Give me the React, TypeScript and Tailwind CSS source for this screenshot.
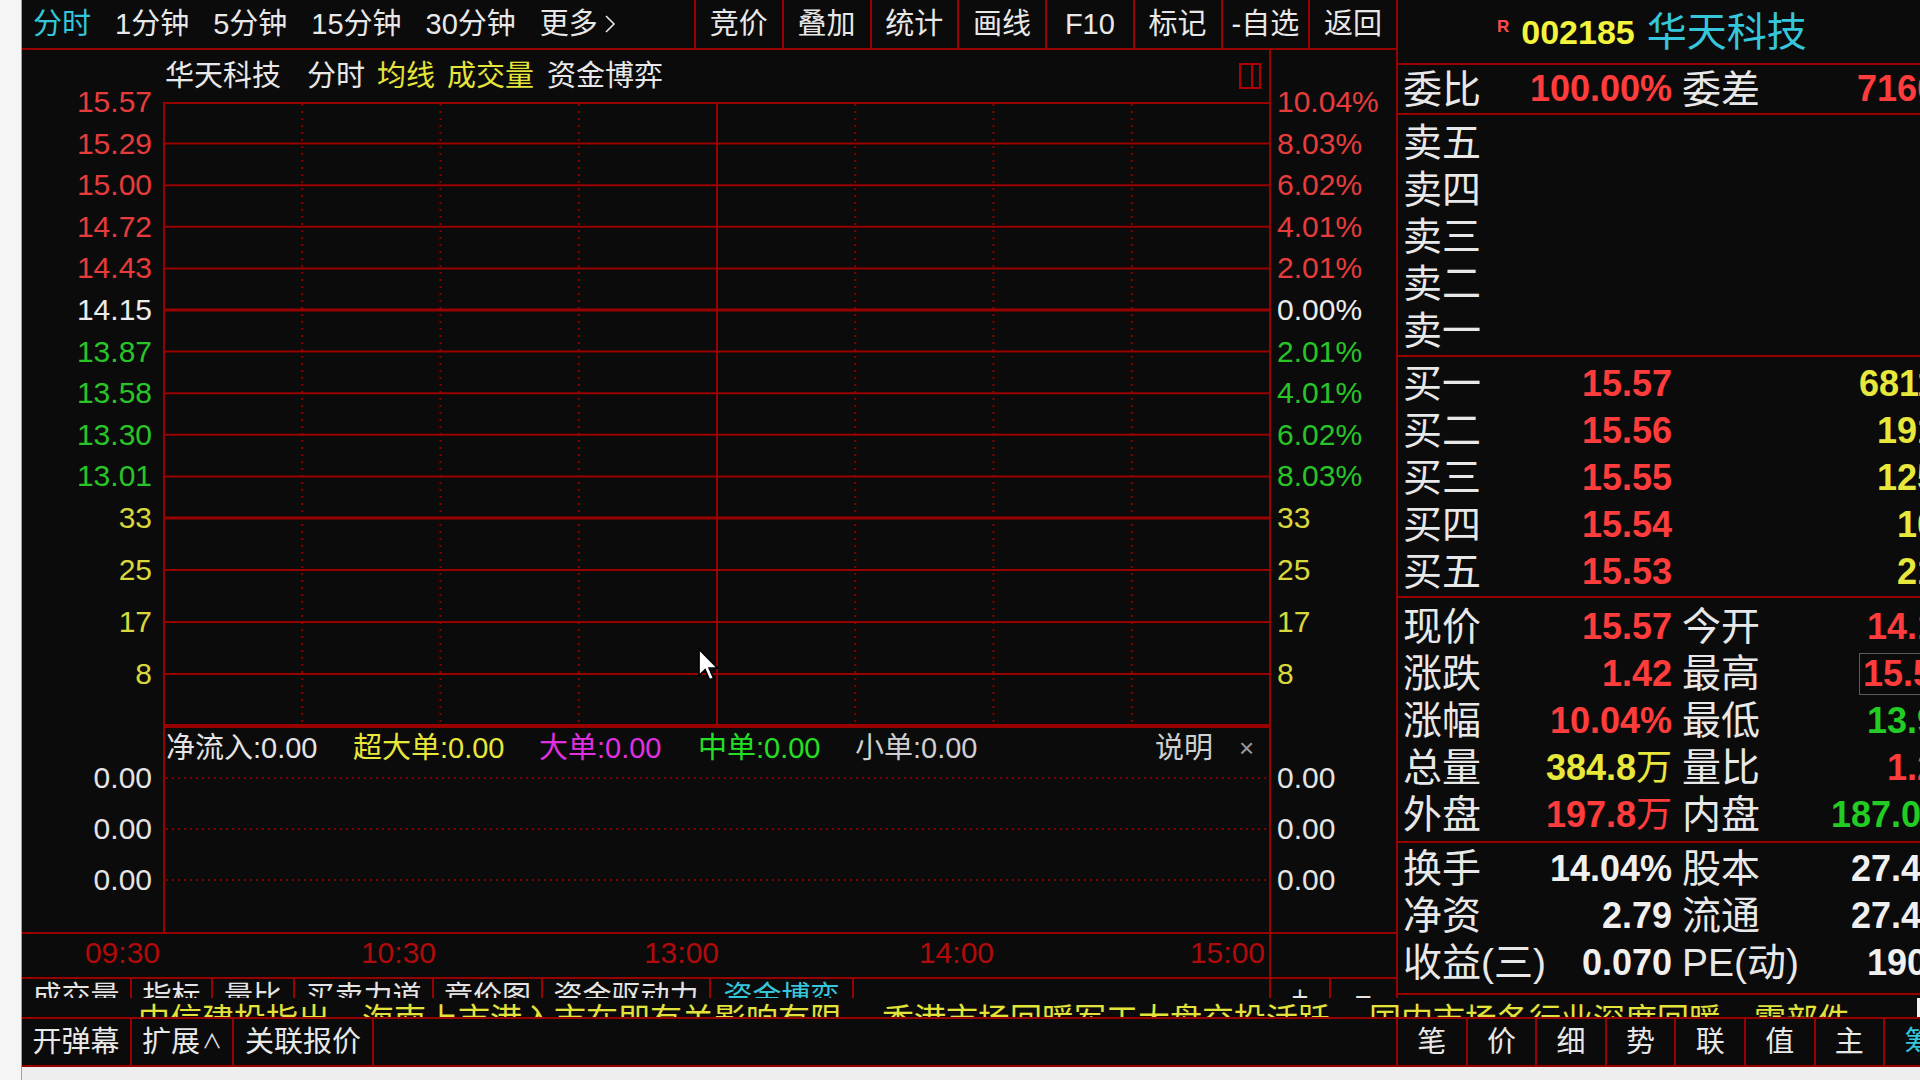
import React from "react";

const LINE = "#990000";

const RED = "text-[#ff3c3c]";
const GREEN = "text-[#22cc22]";
const YEL = "text-[#e8e83c]";
const WH = "text-[#f0f0f0]";

type Tick = { t: string; y: number; c: string };

const PRICE_Y = Array.from({ length: 11 }, (_, i) => i * 41.6);

const leftPrice: Tick[] = [
  ["15.57", "text-[#e63c3c]"],
  ["15.29", "text-[#e63c3c]"],
  ["15.00", "text-[#e63c3c]"],
  ["14.72", "text-[#e63c3c]"],
  ["14.43", "text-[#e63c3c]"],
  ["14.15", "text-[#ececec]"],
  ["13.87", "text-[#28c428]"],
  ["13.58", "text-[#28c428]"],
  ["13.30", "text-[#28c428]"],
  ["13.01", "text-[#28c428]"],
].map(([t, c], i) => ({ t, c, y: PRICE_Y[i] }));

const rightPct: Tick[] = [
  ["10.04%", "text-[#e63c3c]"],
  ["8.03%", "text-[#e63c3c]"],
  ["6.02%", "text-[#e63c3c]"],
  ["4.01%", "text-[#e63c3c]"],
  ["2.01%", "text-[#e63c3c]"],
  ["0.00%", "text-[#ececec]"],
  ["2.01%", "text-[#28c428]"],
  ["4.01%", "text-[#28c428]"],
  ["6.02%", "text-[#28c428]"],
  ["8.03%", "text-[#28c428]"],
].map(([t, c], i) => ({ t, c, y: PRICE_Y[i] }));

const vol: Tick[] = [
  ["33", 416],
  ["25", 468],
  ["17", 520],
  ["8", 572],
].map(([t, y]) => ({ t: t as string, y: y as number, c: "text-[#d8d83c]" }));

const funds: Tick[] = [52, 103, 154].map((y) => ({ t: "0.00", y, c: "text-[#e4e4e4]" }));

function Axis({ items, side }: { items: Tick[]; side: "l" | "r" }) {
  return (
    <div className="relative h-full">
      {items.map((it, i) => (
        <span
          key={i}
          className={`absolute -translate-y-1/2 text-[30px] leading-[30px] whitespace-nowrap ${it.c} ${
            side === "l" ? "right-[11px]" : "left-[6px]"
          }`}
          style={{ top: it.y }}
        >
          {it.t}
        </span>
      ))}
    </div>
  );
}

function PricePlot() {
  const W = 1108;
  const dots = [1, 2, 3, 5, 6, 7].map((k) => 1 + (1106 * k) / 8);
  return (
    <svg width={W} height={624} className="block">
      {dots.map((x) => (
        <line key={x} x1={x} x2={x} y1={2} y2={622} stroke="#8a0000" strokeWidth={2} strokeDasharray="2 5" />
      ))}
      <line x1={554} x2={554} y1={0} y2={624} stroke={LINE} strokeWidth={2} />
      {PRICE_Y.map((y, i) => (
        <line
          key={i}
          x1={0}
          x2={W}
          y1={i === 0 ? 1 : y}
          y2={i === 0 ? 1 : y}
          stroke={LINE}
          strokeWidth={i === 5 || i === 10 ? 3 : 2}
        />
      ))}
      {[468, 520, 572].map((y) => (
        <line key={y} x1={0} x2={W} y1={y} y2={y} stroke={LINE} strokeWidth={2} />
      ))}
      <line x1={0} x2={W} y1={623} y2={623} stroke={LINE} strokeWidth={2} />
      <line x1={1} x2={1} y1={0} y2={624} stroke={LINE} strokeWidth={2} />
      <line x1={1107} x2={1107} y1={0} y2={624} stroke={LINE} strokeWidth={2} />
    </svg>
  );
}

function FundsPlot() {
  return (
    <svg width={1108} height={206} className="absolute inset-0">
      <line x1={0} x2={1108} y1={1} y2={1} stroke={LINE} strokeWidth={2} />
      {[52, 103, 154].map((y) => (
        <line key={y} x1={3} x2={1105} y1={y} y2={y} stroke="#7c0000" strokeWidth={2} strokeDasharray="2 4" />
      ))}
      <line x1={1} x2={1} y1={0} y2={206} stroke={LINE} strokeWidth={2} />
      <line x1={1107} x2={1107} y1={0} y2={206} stroke={LINE} strokeWidth={2} />
    </svg>
  );
}

const times: [string, number][] = [
  ["09:30", 138],
  ["10:30", 414],
  ["13:00", 697],
  ["14:00", 972],
  ["15:00", 1243],
];

const tabs = [
  { t: "成交量", w: "w-[110px]" },
  { t: "指标", w: "w-[81px]" },
  { t: "量比", w: "w-[82px]" },
  { t: "买卖力道", w: "w-[139px]" },
  { t: "竞价图", w: "w-[109px]" },
  { t: "资金驱动力", w: "w-[168px]" },
  { t: "资金博弈", w: "w-[143px]", on: true },
];

function LeftArea() {
  return (
    <div className="w-[1374px] shrink-0 flex flex-col">
      {/* 顶部周期/功能栏 */}
      <div className="h-[50px] shrink-0 flex border-b-2 border-[#990000] text-[29px] leading-none text-[#e8e8e8]">
        <div className="w-[672px] shrink-0 flex items-center gap-[24px] pl-[11px] whitespace-nowrap">
          <span className="text-[#36c6dc]">分时</span>
          <span>1分钟</span>
          <span>5分钟</span>
          <span>15分钟</span>
          <span>30分钟</span>
          <span className="flex items-center">
            更多
            <svg width="12" height="20" viewBox="0 0 12 20" className="ml-[6px]">
              <polyline points="2,2 10,10 2,18" fill="none" stroke="#e8e8e8" strokeWidth="1.6" />
            </svg>
          </span>
        </div>
        {["竞价", "叠加", "统计", "画线", "F10", "标记", "-自选", "返回"].map((b) => (
          <div key={b} className="w-[87.75px] shrink-0 border-l-2 border-[#990000] flex items-center justify-center whitespace-nowrap">
            {b}
          </div>
        ))}
      </div>

      {/* 图表 */}
      <div className="h-[882px] shrink-0 flex flex-col">
        <div className="h-[52px] shrink-0 w-[1249px] border-r-2 border-[#990000] flex items-center pl-[143px] text-[29px] leading-none whitespace-nowrap">
          <span className="text-[#e8e8e8] mr-[26px]">华天科技</span>
          <span className="text-[#e8e8e8] mr-[12px]">分时</span>
          <span className="text-[#e4e43a] mr-[12px]">均线</span>
          <span className="text-[#e4e43a] mr-[13px]">成交量</span>
          <span className="text-[#e8e8e8]">资金博弈</span>
          <div className="ml-auto mr-[8px] mb-[1px] w-[22px] h-[26px] border-2 border-[#b00000] flex">
            <div className="w-[12px] border-r-2 border-[#b00000]" />
          </div>
        </div>

        <div className="h-[624px] shrink-0 flex">
          <div className="w-[141px] shrink-0">
            <Axis items={[...leftPrice, ...vol]} side="l" />
          </div>
          <div className="w-[1108px] shrink-0">
            <PricePlot />
          </div>
          <div className="flex-1">
            <Axis items={[...rightPct, ...vol]} side="r" />
          </div>
        </div>

        <div className="h-[206px] shrink-0 flex">
          <div className="w-[141px] shrink-0">
            <Axis items={funds} side="l" />
          </div>
          <div className="w-[1108px] shrink-0 relative">
            <FundsPlot />
            <div className="relative h-[44px] flex items-center pl-[3px] text-[29px] leading-none whitespace-nowrap">
              <span className="w-[187px] shrink-0 text-[#e4e4e4]">净流入:0.00</span>
              <span className="w-[186px] shrink-0 text-[#e8e83a]">超大单:0.00</span>
              <span className="w-[159px] shrink-0 text-[#e030e0]">大单:0.00</span>
              <span className="w-[157px] shrink-0 text-[#24e024]">中单:0.00</span>
              <span className="w-[300px] shrink-0 text-[#cfcfcf]">小单:0.00</span>
              <span className="text-[#cfcfcf]">说明</span>
              <span className="ml-[26px] text-[26px] text-[#9a9a9a]">×</span>
            </div>
          </div>
          <div className="flex-1">
            <Axis items={funds} side="r" />
          </div>
        </div>
      </div>

      {/* 时间轴 */}
      <div className="h-[45px] shrink-0 flex border-t-2 border-[#990000]">
        <div className="w-[1249px] shrink-0 relative border-r-2 border-[#990000]">
          {times.map(([t, x]) => (
            <span
              key={t}
              className="absolute top-[4px] -translate-x-full text-[30px] leading-[30px] text-[#b00a0a]"
              style={{ left: x }}
            >
              {t}
            </span>
          ))}
        </div>
      </div>

      {/* 指标页签 */}
      <div className="h-[21px] shrink-0 flex border-t-2 border-[#990000] overflow-hidden text-[29px] leading-[29px] whitespace-nowrap">
        {tabs.map((tb) => (
          <div
            key={tb.t}
            className={`${tb.w} shrink-0 border-r-2 border-[#990000] text-center pt-[4px] ${
              tb.on ? "text-[#36c6dc]" : "text-[#e4e4e4]"
            }`}
          >
            {tb.t}
          </div>
        ))}
        <div className="w-[417px] shrink-0 border-r-2 border-[#990000]" />
        <div className="w-[60px] shrink-0 border-r-2 border-[#990000] text-center pt-[4px] text-[#e4e4e4]">+</div>
        <div className="flex-1 text-center pt-[4px] text-[#e4e4e4]">−</div>
      </div>
    </div>
  );
}

function QRow({
  l,
  v,
  vc = "",
  r,
  rv,
  rvc = "",
  h = "h-[47px]",
}: {
  l: React.ReactNode;
  v?: React.ReactNode;
  vc?: string;
  r?: React.ReactNode;
  rv?: React.ReactNode;
  rvc?: string;
  h?: string;
}) {
  return (
    <div className={`${h} flex items-center pl-[5px] whitespace-nowrap leading-none`}>
      <span className="w-[120px] shrink-0 text-[39px] text-[#e8e8e8]">{l}</span>
      <span className={`w-[149px] shrink-0 text-right text-[36px] font-bold ${vc}`}>{v}</span>
      <span className="w-[90px] shrink-0 pl-[10px] text-[39px] text-[#e8e8e8]">{r}</span>
      <span className={`w-[195px] shrink-0 text-right text-[36px] font-bold ${rvc}`}>{rv}</span>
    </div>
  );
}

const wan = <span className="font-normal">万</span>;

function RightPanel() {
  return (
    <div className="flex-1 min-w-0 overflow-hidden border-l-2 border-[#990000] flex flex-col">
      <div className="h-[65px] shrink-0 border-b-2 border-[#990000] flex items-center pl-[99px] whitespace-nowrap leading-none">
        <span className="self-start mt-[18px] text-[17px] font-bold text-[#ff4a4a]">R</span>
        <span className="ml-[12px] text-[34px] font-bold text-[#f4f43c]">002185</span>
        <span className="ml-[12px] text-[40px] text-[#36c6dc]">华天科技</span>
      </div>

      <div className="h-[50px] shrink-0 border-b-2 border-[#990000]">
        <QRow h="h-[48px]" l="委比" v="100.00%" vc={RED} r="委差" rv="71606" rvc={RED} />
      </div>

      <div className="h-[242px] shrink-0 border-b-2 border-[#990000] pt-[4px]">
        {["卖五", "卖四", "卖三", "卖二", "卖一"].map((s) => (
          <QRow key={s} l={s} />
        ))}
      </div>

      <div className="h-[241px] shrink-0 border-b-2 border-[#990000] pt-[3px]">
        {[
          ["买一", "15.57", "68117"],
          ["买二", "15.56", "1912"],
          ["买三", "15.55", "1250"],
          ["买四", "15.54", "108"],
          ["买五", "15.53", "213"],
        ].map(([l, p, q]) => (
          <QRow key={l} l={l} v={p} vc={RED} rv={q} rvc={YEL} />
        ))}
      </div>

      <div className="h-[245px] shrink-0 border-b-2 border-[#990000] pt-[5px]">
        <QRow l="现价" v="15.57" vc={RED} r="今开" rv="14.18" rvc={RED} />
        <QRow
          l="涨跌"
          v="1.42"
          vc={RED}
          r="最高"
          rv={<span className="inline-block border border-[#5c5c5c] px-[3px] leading-[40px]">15.57</span>}
          rvc={RED}
        />
        <QRow l="涨幅" v="10.04%" vc={RED} r="最低" rv="13.95" rvc={GREEN} />
        <QRow l="总量" v={<>384.8{wan}</>} vc={YEL} r="量比" rv="1.28" rvc={RED} />
        <QRow l="外盘" v={<>197.8{wan}</>} vc={RED} r="内盘" rv={<>187.0{wan}</>} rvc={GREEN} />
      </div>

      <div className="h-[152px] shrink-0 border-b-2 border-[#990000] pt-[2px]">
        <QRow l="换手" v="14.04%" vc={WH} r="股本" rv={<>27.4<span className="font-normal">亿</span></>} rvc={WH} />
        <QRow l="净资" v="2.79" vc={WH} r="流通" rv={<>27.4<span className="font-normal">亿</span></>} rvc={WH} />
        <QRow l="收益(三)" v="0.070" vc={WH} r="PE(动)" rv="190.5" rvc={WH} />
      </div>
    </div>
  );
}

export default function App() {
  return (
    <div className="relative w-[1920px] h-[1080px] overflow-hidden flex bg-[#f0f0f0] [font-family:'Liberation_Sans','Noto_Sans_CJK_SC',sans-serif]">
      <div className="w-[22px] shrink-0 bg-[#f5f5f5] border-r border-[#a0a0a0]" />

      <div className="flex-1 min-w-0 flex flex-col">
        <div className="h-[998px] shrink-0 flex bg-[#0b0b0b]">
          <LeftArea />
          <RightPanel />
        </div>

        {/* 滚动资讯 */}
        <div className="h-[19px] shrink-0 flex bg-[#0b0b0b] overflow-hidden text-[32px] leading-[32px] text-[#e2e23a] whitespace-nowrap pt-[6px]">
          <span className="ml-[116px]">中信建投指出，海南上市港入市在即有关影响有限</span>
          <span className="ml-[40px]">香港市场回暖军工大盘交投活跃</span>
          <span className="ml-[39px]">国内市场各行业深度回暖</span>
          <span className="ml-[33px]">零部件</span>
          <span className="ml-auto -mt-[6px] w-[3px] h-[20px] bg-[#f4f4f4] shrink-0" />
        </div>

        {/* 底部栏 */}
        <div className="h-[50px] shrink-0 flex bg-[#0b0b0b] border-y-2 border-[#990000] text-[29px] leading-none text-[#e8e8e8] whitespace-nowrap">
          <div className="w-[110px] shrink-0 border-r-2 border-[#990000] flex items-center justify-center">开弹幕</div>
          <div className="w-[102px] shrink-0 border-r-2 border-[#990000] flex items-center justify-center">
            扩展<span className="text-[20px] ml-[2px]">∧</span>
          </div>
          <div className="w-[140px] shrink-0 border-r-2 border-[#990000] flex items-center justify-center">关联报价</div>
          <div className="w-[1022px] shrink-0" />
          {["笔", "价", "细", "势", "联", "值", "主", "筹"].map((c, i) => (
            <div
              key={c}
              className={`w-[69.6px] shrink-0 border-l-2 border-[#990000] flex items-center justify-center ${
                i === 7 ? "text-[#36c6dc]" : ""
              }`}
            >
              {c}
            </div>
          ))}
        </div>

        <div className="flex-1 bg-[#eeeeee]" />
      </div>

      {/* 鼠标指针 */}
      <svg width="22" height="34" viewBox="0 0 13 20" className="absolute left-[698px] top-[648px]">
        <path d="M0.6 0.6 L0.6 16.2 L4.2 12.8 L6.8 18.8 L9.2 17.8 L6.6 11.9 L11.6 11.9 Z" fill="#ffffff" stroke="#000000" strokeWidth="1" />
      </svg>
    </div>
  );
}
